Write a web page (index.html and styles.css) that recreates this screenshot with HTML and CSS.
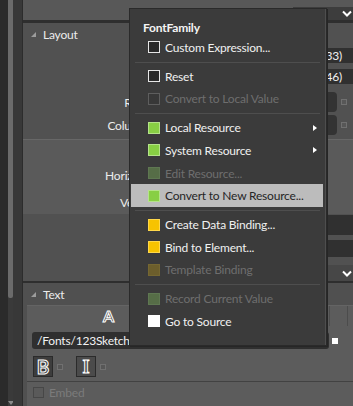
FILE: index.html
```html
<!DOCTYPE html>
<html lang="en">
<head>
    <meta charset="UTF-8" />
    <title>Properties - FontFamily menu</title>
    <link rel="stylesheet" href="styles.css">
</head>
<body>
    <div class="screen">
        <div class="gutter">
            <div class="gutter-edge"></div>
            <div class="scrollbar">
                <div class="thumb"></div>
                <span class="scroll-down"></span>
            </div>
            <div class="gutter-pad"></div>
        </div>

        <div class="panel">
            <div class="prev-tail">
                <div class="expander">
                    <svg width="10" height="7" viewBox="0 0 10 7"><polyline points="1,1.5 5,5.5 9,1.5" fill="none" stroke="#fff" stroke-width="2"/></svg>
                </div>
            </div>

            <section class="layout">
                <div class="sec-head">
                    <svg class="tri" width="5" height="5" viewBox="0 0 5 5"><polygon points="0,5 5,5 5,0" fill="#9c9c9c"/></svg>
                    <span>Layout</span>
                </div>

                <div class="prop size-row first">
                    <span class="label">Width</span>
                    <div class="field dark">Auto (33)</div>
                </div>
                <div class="prop size-row second">
                    <span class="label">Height</span>
                    <div class="field dark">Auto (46)</div>
                </div>
                <div class="prop grid-row third">
                    <span class="label">Row</span>
                    <div class="field box">0</div>
                    <span class="marker"></span>
                </div>
                <div class="prop grid-row">
                    <span class="label">Column</span>
                    <div class="field box">0</div>
                    <span class="marker"></span>
                </div>

                <div class="align-box">
                    <div class="prop align-row">
                        <span class="label">HorizontalAlignment</span>
                    </div>
                    <div class="prop align-row">
                        <span class="label">VerticalAlignment</span>
                    </div>
                </div>

                <div class="prop margin-row tall">
                    <div class="field dark"></div>
                </div>
                <div class="prop margin-row short">
                    <div class="field dark"></div>
                </div>

                <div class="more">
                    <div class="expander">
                        <svg width="10" height="7" viewBox="0 0 10 7"><polyline points="1,1.5 5,5.5 9,1.5" fill="none" stroke="#fff" stroke-width="2"/></svg>
                    </div>
                </div>
            </section>

            <section class="text">
                <div class="sec-head">
                    <svg class="tri" width="5" height="5" viewBox="0 0 5 5"><polygon points="0,5 5,5 5,0" fill="#9c9c9c"/></svg>
                    <span>Text</span>
                </div>

                <div class="text-body">
                    <div class="tabs">
                        <div class="tab font-tab"><span class="glyph">A</span></div>
                        <div class="tab para-tab"></div>
                        <div class="tab small-tab"></div>
                        <div class="tab"></div>
                    </div>

                    <div class="font-row">
                        <div class="field path">/Fonts/123Sketch.ttf#123Sketch</div>
                        <span class="marker local"></span>
                    </div>

                    <div class="style-row">
                        <button class="style-btn bold"><span class="glyph">B</span></button>
                        <span class="marker"></span>
                        <button class="style-btn italic"><span class="glyph">I</span></button>
                        <span class="marker"></span>
                    </div>

                    <div class="embed-row">
                        <span class="check"></span>
                        <span>Embed</span>
                    </div>
                </div>
            </section>
        </div>

        <div class="menu">
            <div class="menu-title">FontFamily</div>
            <div class="item"><span class="sq dark"></span>Custom Expression...</div>
            <div class="sep"></div>
            <div class="item"><span class="sq dark"></span>Reset</div>
            <div class="item off"><span class="sq dark-off"></span>Convert to Local Value</div>
            <div class="sep"></div>
            <div class="item"><span class="sq green"></span>Local Resource<span class="sub"></span></div>
            <div class="item"><span class="sq green"></span>System Resource<span class="sub"></span></div>
            <div class="item off"><span class="sq green-off"></span>Edit Resource...</div>
            <div class="item hot"><span class="sq green"></span>Convert to New Resource...</div>
            <div class="sep"></div>
            <div class="item"><span class="sq yellow"></span>Create Data Binding...</div>
            <div class="item"><span class="sq yellow"></span>Bind to Element...</div>
            <div class="item off"><span class="sq yellow-off"></span>Template Binding</div>
            <div class="sep"></div>
            <div class="item off"><span class="sq green-off"></span>Record Current Value</div>
            <div class="item"><span class="sq white"></span>Go to Source</div>
        </div>
    </div>
</body>
</html>
```

FILE: styles.css
```css
* {
    margin: 0;
    padding: 0;
    box-sizing: border-box;
}

body {
    width: 353px;
    height: 406px;
    overflow: hidden;
    background: #2d2d2d;
    font-family: Lato, "Open Sans", sans-serif;
    font-size: 12px;
    letter-spacing: -0.2px;
    color: #f0f0f0;
}

.screen {
    position: relative;
    display: flex;
    width: 353px;
    height: 406px;
    overflow: hidden;
}

/* left gutter + scrollbar */
.gutter {
    display: flex;
    flex: none;
    width: 22px;
}

.gutter-edge {
    width: 8px;
    background: #2b2b2b;
}

.scrollbar {
    width: 5px;
    display: flex;
    flex-direction: column;
    align-items: center;
    background: #3a3a3a;
}

.thumb {
    width: 5px;
    height: 298px;
    background: #6b6b6b;
    border-radius: 0 0 2px 2px;
}

.scroll-down {
    margin-top: auto;
    margin-bottom: 1px;
    border-left: 3px solid transparent;
    border-right: 3px solid transparent;
    border-top: 4px solid #8a8a8a;
}

.gutter-pad {
    flex: 1;
    background: #383838;
}

/* property panel */
.panel {
    flex: 1;
    min-width: 0;
    background: #505050;
    border-left: 1px solid #2c2c2c;
}

.prev-tail {
    height: 23px;
    display: flex;
    justify-content: flex-end;
    align-items: flex-end;
    background: #585858;
    border-bottom: 3px solid #2e2e2e;
}

.expander {
    width: 60px;
    height: 13px;
    display: flex;
    justify-content: flex-end;
    align-items: center;
    padding-right: 1px;
    background: #3d3d3d;
}

.sec-head {
    height: 22px;
    display: flex;
    align-items: center;
    gap: 7px;
    padding-left: 8px;
    color: #ececec;
}

.tri {
    flex: none;
}

.layout {
    background: #515151;
    border-bottom: 2px solid #2e2e2e;
}

.prop {
    display: flex;
    align-items: center;
    padding-left: 4px;
}

.label {
    flex: none;
    text-align: right;
    margin-right: 6px;
    color: #ececec;
    white-space: nowrap;
}

.field {
    flex: 1;
    min-width: 0;
    height: 100%;
    display: flex;
    align-items: center;
    white-space: nowrap;
    overflow: hidden;
}

.field.dark {
    background: #303030;
    justify-content: flex-end;
    padding-right: 11px;
}

.field.box {
    background: #333333;
    border-radius: 0 4px 4px 0;
    padding-left: 6px;
}

.marker {
    flex: none;
    width: 6px;
    height: 6px;
    margin-left: 4px;
    background: #575757;
    border: 1px solid #707070;
}

.size-row {
    height: 15px;
}

.size-row .label {
    width: 140px;
}

.size-row.first {
    margin-top: 3px;
}

.size-row.second {
    margin-top: 6px;
}

.grid-row {
    height: 20px;
    margin-top: 3px;
    padding-right: 6px;
}

.grid-row.third {
    margin-top: 8px;
}

.grid-row .label {
    width: 120px;
}

.align-box {
    margin-top: 4px;
    height: 75px;
    padding-top: 23px;
    background: #5a5a5a;
    border-top: 1px solid #676767;
}

.align-row {
    height: 24px;
    margin-bottom: 3px;
}

.align-row .label {
    width: 183px;
}

.margin-row {
    padding-left: 137px;
}

.margin-row.tall {
    height: 20px;
    margin-top: 1px;
}

.margin-row.short {
    height: 17px;
    margin-top: 5px;
}

.more {
    height: 16px;
    margin-top: 8px;
    display: flex;
    justify-content: flex-end;
}

.more .expander {
    height: 16px;
    background: #474747;
}

/* text section */
.text-body {
    margin-left: 4px;
    height: 104px;
    background: #5c5c5c;
    border-top: 1px solid #646464;
}

.tabs {
    display: flex;
    height: 20px;
}

.tab {
    display: flex;
    justify-content: center;
    align-items: center;
    border-right: 1px solid #4c4c4c;
}

.font-tab {
    width: 163px;
    border-right: none;
}

.para-tab {
    width: 140px;
}

.small-tab {
    width: 18px;
}

.tab:last-child {
    flex: 1;
    border-right: none;
}

.glyph {
    font-weight: 700;
    color: #474747;
    -webkit-text-stroke: 1px #ffffff;
}

.font-tab .glyph {
    font-size: 16px;
    line-height: 1;
}

.font-row {
    display: flex;
    align-items: center;
    height: 17px;
    margin-top: 6px;
    padding-left: 5px;
    padding-right: 15px;
}

.field.path {
    background: #2f2f2f;
    border-radius: 3px;
    padding-left: 5px;
    color: #f2f2f2;
}

.marker.local {
    margin-left: 3px;
    background: #ffffff;
    border-color: #ffffff;
}

.style-row {
    display: flex;
    align-items: center;
    height: 21px;
    margin-top: 7px;
    padding-left: 6px;
}

.style-btn {
    width: 20px;
    height: 21px;
    display: flex;
    justify-content: center;
    align-items: center;
    border: 1px solid #2b2b2b;
    background: #3d3d3d;
    font-family: Lato, sans-serif;
    font-size: 19px;
    line-height: 1;
}

.style-btn.italic {
    margin-left: 13px;
    background: #4b4b4b;
}

.style-btn.italic .glyph {
    font-family: "Liberation Serif", serif;
    font-size: 18px;
}

.style-row .marker {
    margin-left: 4px;
}

.embed-row {
    display: flex;
    align-items: center;
    gap: 5px;
    height: 17px;
    margin-top: 4px;
    padding-left: 6px;
    padding-top: 5px;
    border-top: 1px solid #424242;
    color: #7b7b7b;
}

.check {
    width: 11px;
    height: 11px;
    border: 1px solid #474747;
    background: #5a5a5a;
}

/* context menu over the panel */
.menu {
    position: absolute;
    left: 129px;
    top: 8px;
    width: 198px;
    height: 338px;
    background: #3b3b3b;
    border: 1px solid #2a2a2a;
    box-shadow: inset -1px 0 0 #4e4e4e, 1px 1px 0 #262626;
}

.menu-title {
    padding: 11px 0 0 13px;
    line-height: 16px;
    font-weight: 700;
    color: #f4f4f4;
}

.item {
    display: flex;
    align-items: center;
    gap: 5px;
    height: 22.6px;
    margin: 0 3px 0 1px;
    padding-left: 17px;
    color: #f0f0f0;
    white-space: nowrap;
}

.item.off {
    color: #6e6e6e;
}

.item.hot {
    background: #bcbcbc;
    color: #262626;
}

.sq {
    flex: none;
    width: 12px;
    height: 12px;
    border: 1px solid #e6e6e6;
}

.sq.dark { background: #2a2a2a; }
.sq.dark-off { background: #383838; border-color: #5e5e5e; }
.sq.green { background: #88cf44; border-color: #b5e28a; }
.sq.green-off { background: #566d47; border-color: #5f7752; }
.sq.yellow { background: #f7c300; border-color: #ffd84a; }
.sq.yellow-off { background: #6c5e2c; border-color: #756732; }
.sq.white { background: #ffffff; border-color: #ffffff; }

.sub {
    margin-left: auto;
    margin-right: 6px;
    border-left: 4px solid #ffffff;
    border-top: 3.5px solid transparent;
    border-bottom: 3.5px solid transparent;
}

.sep {
    height: 1px;
    margin: 3px 6px 2.4px 5px;
    background: #4e4e4e;
}
```
